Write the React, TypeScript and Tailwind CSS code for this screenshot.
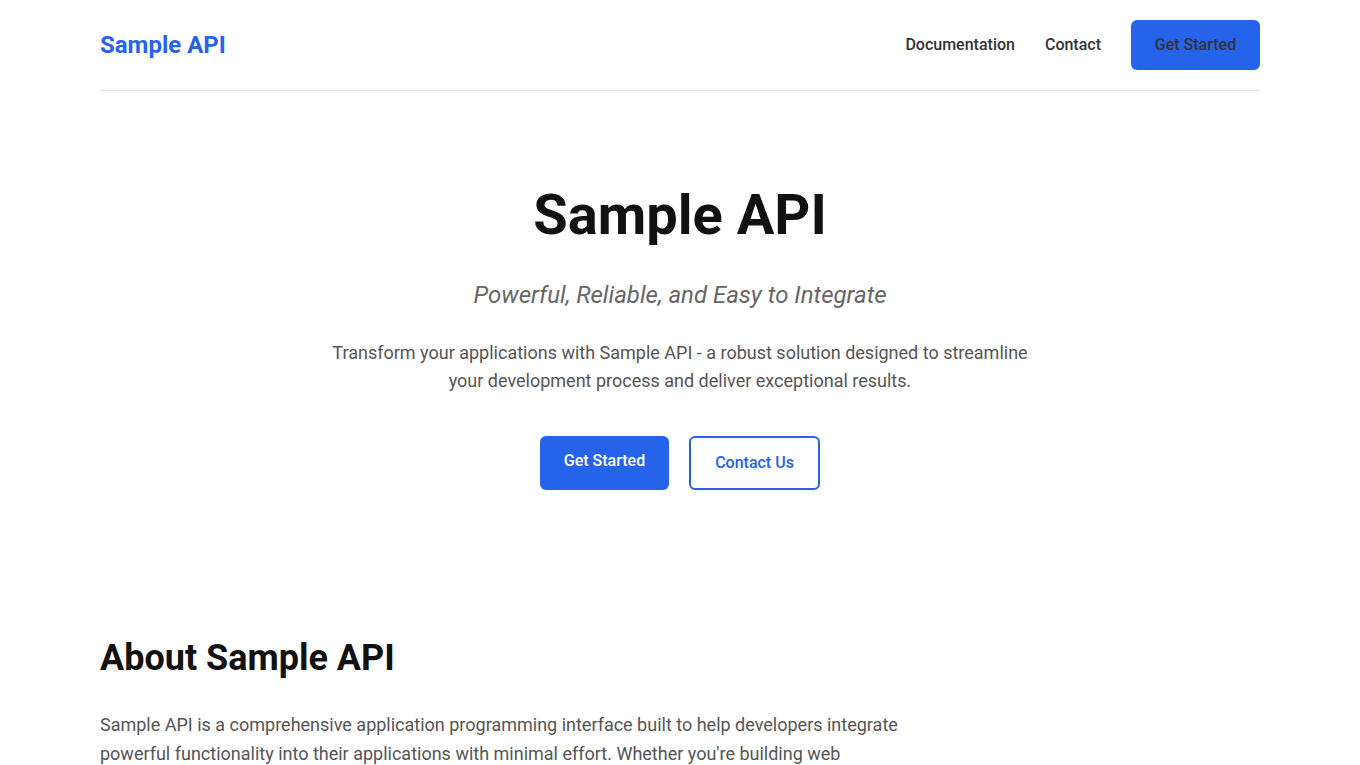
import React from 'react';

const font = { fontFamily: 'Roboto, "Liberation Sans", sans-serif' };

const Header: React.FC = () => (
  <header className="border-b border-[#e5e5e5] py-5 flex items-center justify-between">
    <a className="text-2xl font-bold text-[#2563eb] leading-none">Sample API</a>
    <nav className="flex items-center">
      <a className="text-base font-medium text-[#333] mr-[30px]">Documentation</a>
      <a className="text-base font-medium text-[#333] mr-[30px]">Contact</a>
      <a className="h-[50px] w-[129px] flex items-center justify-center rounded-md bg-[#2563eb] text-base font-medium text-[#333]">
        Get Started
      </a>
    </nav>
  </header>
);

const Hero: React.FC = () => (
  <section className="pt-[91px] flex flex-col items-center text-center">
    <h1 className="text-[56px] leading-[1.2] font-bold text-[#111]">Sample API</h1>
    <p className="mt-[28px] text-2xl leading-[1.5] italic text-[#666]">
      Powerful, Reliable, and Easy to Integrate
    </p>
    <p className="mt-[26px] max-w-[700px] text-lg leading-7 text-[#555]">
      Transform your applications with Sample API - a robust solution designed to streamline your
      development process and deliver exceptional results.
    </p>
    <div className="mt-[41px] flex gap-5">
      <a className="h-[54px] w-[129px] pt-[13px] rounded-md bg-[#2563eb] text-base font-medium text-white text-center leading-6">
        Get Started
      </a>
      <a className="h-[54px] w-[131px] flex items-center justify-center rounded-md border-2 border-[#2563eb] text-base font-medium text-[#2563eb]">
        Contact Us
      </a>
    </div>
  </section>
);

const About: React.FC = () => (
  <section className="pt-[147px]">
    <h2 className="text-4xl leading-[1.2] font-bold text-[#111]">About Sample API</h2>
    <p className="mt-[31px] max-w-[800px] text-lg leading-[1.6] text-[#555]">
      Sample API is a comprehensive application programming interface built to help developers
      integrate powerful functionality into their applications with minimal effort. Whether you're
      building web applications, mobile apps, or enterprise solutions, Sample API provides the tools
      you need to succeed.
    </p>
  </section>
);

export default function App() {
  return (
    <div className="min-h-screen bg-white" style={font}>
      <div className="mx-auto w-[1160px] pb-20">
        <Header />
        <Hero />
        <About />
      </div>
    </div>
  );
}
